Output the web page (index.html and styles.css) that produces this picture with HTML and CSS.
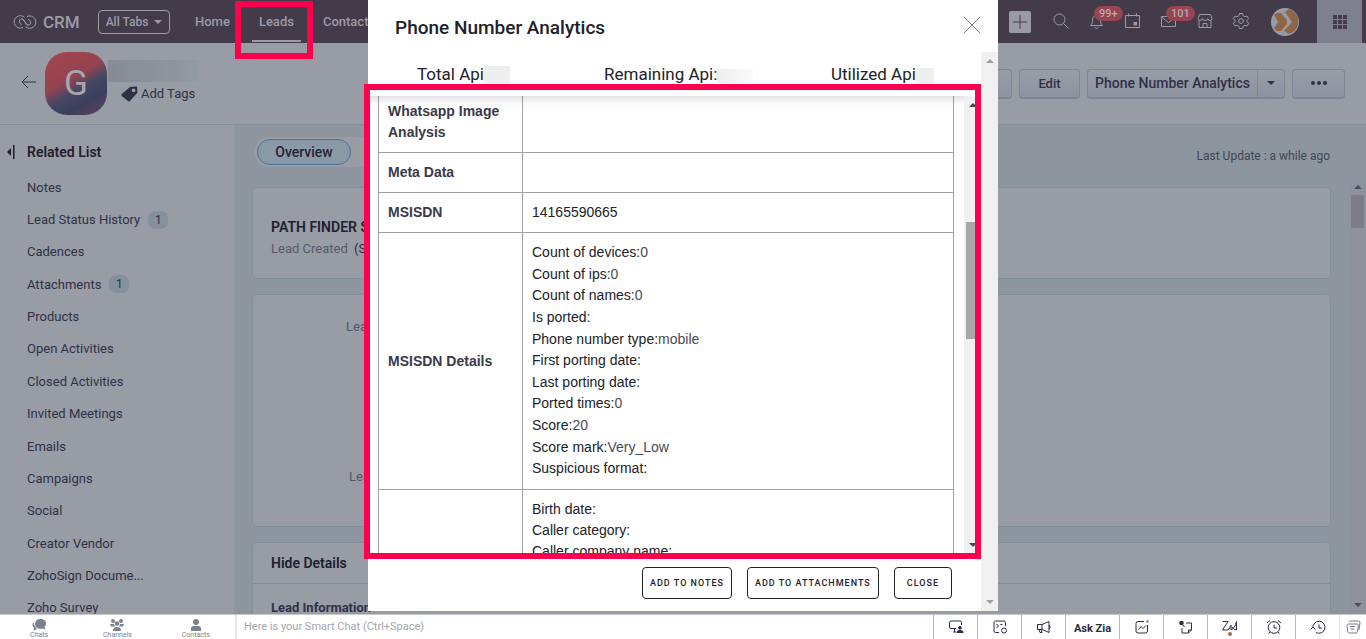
FILE: index.html
```html
<!DOCTYPE html>
<html lang="en">
<head>
    <meta charset="UTF-8">
    <meta name="viewport" content="width=device-width, initial-scale=1.0">
    <title>Phone Number Analytics</title>
    <link rel="stylesheet" href="styles.css">
</head>
<body>
    <header class="topbar">
        <svg class="logo" width="24" height="16" viewBox="0 0 24 16"><path d="M9.500 4.500L13.500 10q1.500 2 3.300.6t.4-3.400L15.500 5M14.500 11.500L10.500 6Q9 4 7.200 5.400t-.4 3.400L8.500 11M10 13.500a6.200 6.200 0 1 1 1.500-10.200M14 2.500a6.200 6.200 0 1 1-1.500 10.200"/></svg>
        <span class="brand">CRM</span>
        <button class="all-tabs">All Tabs <i class="caret"></i></button>
        <nav class="nav">
            <a href="#">Home</a>
            <a href="#" class="active">Leads</a>
            <a href="#">Contacts</a>
        </nav>
        <div class="tools">
            <button class="add" aria-label="Create"><svg width="22" height="22" viewBox="0 0 22 22"><path d="M11 4v14M4 11h14"/></svg></button>
            <button class="tool" aria-label="Search"><svg width="18" height="18" viewBox="0 0 18 18"><circle cx="7.500" cy="7.500" r="5.500"/><path d="M11.500 11.500l5 5"/></svg></button>
            <button class="tool" aria-label="Notifications"><svg width="18" height="18" viewBox="0 0 18 18"><path d="M2.500 13.500h12c-1.500-1.500-2-3-2-5.500 0-3-1.500-4.500-4-4.500S4.500 5 4.500 8c0 2.500-.5 4-2 5.500zM8.500 1.500v2M6.500 15.500q2 2 4 0"/></svg><span class="count">99+</span></button>
            <button class="tool" aria-label="Calendar"><svg width="18" height="18" viewBox="0 0 18 18"><path d="M1.500 3.500h14v12h-14zM4.500 1.500v3M12.500 1.500v3"/><path class="solid" d="M9.500 10h3.500v3.500H9.500z"/></svg></button>
            <button class="tool" aria-label="Email"><svg width="18" height="18" viewBox="0 0 18 18"><path d="M1.500 4.500h14v10h-14zM1.500 5l7 5.500 7-5.500"/></svg><span class="count">101</span></button>
            <button class="tool" aria-label="Marketplace"><svg width="18" height="18" viewBox="0 0 18 18"><path d="M3.500 2.500h11l1.500 4q0 2-2 2t-2.300-2q-.3 2-2.700 2t-2.700-2q-.3 2-2.300 2t-2-2zM3 8.500v7h12v-7M7 15.500v-4h4v4"/></svg></button>
            <button class="tool" aria-label="Settings"><svg width="18" height="18" viewBox="0 0 18 18"><path d="M7.500 1.500h3l.6 2.200 1.800 1 2.200-.6 1.500 2.600-1.600 1.600v1.400l1.600 1.600-1.500 2.600-2.200-.6-1.800 1-.6 2.200h-3l-.6-2.200-1.800-1-2.200.6-1.500-2.600L3 9.700V8.300L1.400 6.700l1.500-2.600 2.200.6 1.800-1z"/><circle cx="9" cy="9" r="2.400"/></svg></button>
            <svg class="user" width="28" height="28" viewBox="0 0 28 28"><circle cx="14" cy="14" r="14" fill="#989ba5"/><path d="M3 7l3-2h4l6 7v4l-6 7H6l-3-3 4-6zM14 4l4-3c4 1 7 4 9 8v8c-2 5-5 8-9 9l-5-3 8-9z" fill="#8f6645"/></svg>
            <button class="apps" aria-label="All apps"><svg width="14" height="14" viewBox="0 0 14 14"><path d="M0 0h4v4H0zM5 0h4v4H5zM10 0h4v4h-4zM0 5h4v4H0zM5 5h4v4H5zM10 5h4v4h-4zM0 10h4v4H0zM5 10h4v4H5zM10 10h4v4h-4z"/></svg></button>
        </div>
        <div class="mark mark-leads"></div>
    </header>

    <section class="record">
        <button class="back" aria-label="Back"><svg width="16" height="14" viewBox="0 0 16 14"><path d="M15 7H1M7 1L1 7l6 6"/></svg></button>
        <div class="initial">G</div>
        <div class="who">
            <div class="hidden-name"></div>
            <button class="tags"><svg width="17" height="16" viewBox="0 0 17 16"><path fill-rule="evenodd" d="M9 1l7-.5.5 6L9 15q-1 1-2 0L.8 10q-.8-1 0-2zM12.500 2.500a1.800 1.800 0 1 0 .1 0z"/></svg>Add Tags</button>
        </div>
        <div class="actions">
            <button class="btn send">Send Email</button>
            <button class="btn edit">Edit</button>
            <div class="split">
                <button>Phone Number Analytics</button>
                <button class="drop" aria-label="More analytics"><i class="caret"></i></button>
            </div>
            <button class="btn more" aria-label="More"><svg width="16" height="4" viewBox="0 0 16 4"><circle cx="2" cy="2" r="2"/><circle cx="8" cy="2" r="2"/><circle cx="14" cy="2" r="2"/></svg></button>
        </div>
    </section>

    <main class="page">
        <aside class="sidebar">
            <h2><svg class="fold" width="8" height="14" viewBox="0 0 8 14"><path d="M4 3v8L0 7zM6 0h1.500v14H6z"/></svg>Related List</h2>
            <ul>
                <li><a href="#">Notes</a></li>
                <li><a href="#">Lead Status History</a><span class="num">1</span></li>
                <li><a href="#">Cadences</a></li>
                <li><a href="#">Attachments</a><span class="num">1</span></li>
                <li><a href="#">Products</a></li>
                <li><a href="#">Open Activities</a></li>
                <li><a href="#">Closed Activities</a></li>
                <li><a href="#">Invited Meetings</a></li>
                <li><a href="#">Emails</a></li>
                <li><a href="#">Campaigns</a></li>
                <li><a href="#">Social</a></li>
                <li><a href="#">Creator Vendor</a></li>
                <li><a href="#">ZohoSign Docume...</a></li>
                <li><a href="#">Zoho Survey</a></li>
            </ul>
        </aside>
        <div class="content">
            <div class="view-bar">
                <div class="views"><button>Overview</button></div>
                <span class="updated">Last Update : a while ago</span>
            </div>
            <div class="scroll-area">
                <div class="cards">
                    <section class="card path">
                        <h3>PATH FINDER STAGES</h3>
                        <p><span>Lead Created</span> (Stage)</p>
                    </section>
                    <section class="card fields">
                        <p>Lead Owner</p>
                        <p>Lead Status</p>
                    </section>
                    <section class="card details">
                        <h3>Hide Details</h3>
                        <h4>Lead Information</h4>
                    </section>
                </div>
                <div class="scrollbar page-scroll"><i class="up"></i><div class="thumb"></div><i class="down"></i></div>
            </div>
        </div>
    </main>

    <footer class="chatbar">
        <div class="chat-tabs">
            <button><svg width="14" height="12" viewBox="0 0 14 12"><path d="M8 0c4 0 6 2 6 4.500 0 1.500-.5 2.500-1.500 3.500l1 2.500-3-1Q4 10.500 3 6 3 0 8 0zM2 3Q1 7 5 10l-3 1.500L2 9Q-1 6 2 3z"/></svg>Chats</button>
            <button><svg width="14" height="12" viewBox="0 0 14 12"><circle cx="3" cy="2" r="2"/><circle cx="11" cy="2" r="2"/><circle cx="7" cy="4.500" r="2.300"/><path d="M0 5h4l1 2.500H1zM14 5h-4L9 7.500h4zM3 12q0-4 4-4t4 4z"/></svg>Channels</button>
            <button><svg width="14" height="12" viewBox="0 0 14 12"><circle cx="7" cy="3" r="3"/><path d="M2 12V9.500Q2 7 4.500 7h5Q12 7 12 9.500V12z"/></svg>Contacts</button>
        </div>
        <input class="smart-chat" type="text" aria-label="Smart Chat" placeholder="Here is your Smart Chat (Ctrl+Space)">
        <div class="dock">
            <button aria-label="Screen share"><svg width="16" height="16" viewBox="0 0 16 16"><path d="M8 9.500H3q-1.500 0-1.500-1.500V3.500Q1.500 2 3 2h9q1.500 0 1.500 1.500V6M5 13h3M6.500 9.500V13"/><path class="solid" d="M12 7a1.800 1.800 0 1 1-.1 0zM8.500 14q0-3 3.500-3t3.500 3z"/></svg></button>
            <button aria-label="Scripts"><svg width="16" height="16" viewBox="0 0 16 16"><path d="M7 13.500H3.500Q2 13.500 2 12V3.500Q2 2 3.500 2H12q1.500 0 1.500 1.500V7M4.500 5l2 2-2 2M8.500 5.500h2"/><circle cx="12" cy="11.500" r="2.500"/></svg></button>
            <button aria-label="Announcements"><svg width="16" height="16" viewBox="0 0 16 16"><path d="M1.500 5.500H6l7-3v11l-7-3H1.500zM6 5.500v5M3 10.500l1 3h2l-1-3M13 6q2.500 2 0 4"/></svg></button>
            <button class="ask">Ask Zia</button>
            <button aria-label="Insights"><svg width="16" height="16" viewBox="0 0 16 16"><path d="M10 2.500H4Q2 2.500 2 4.500V12q0 2 2 2h7.500q2 0 2-2V6M4.500 10.500L7 7.500l2 2L12 6.500"/><circle class="dot" cx="13.500" cy="2.500" r="1.200"/></svg></button>
            <button aria-label="Sticky notes"><svg width="16" height="16" viewBox="0 0 16 16"><path d="M8 4h5.500v7l-3 3H4V9M10.500 14v-3h3M4.500 5.500l2 2.500"/><circle class="solid" cx="3.500" cy="4" r="2.300"/></svg></button>
            <button aria-label="Zia"><svg width="20" height="18" viewBox="0 0 20 18"><path d="M2.500 3.500H8L2.500 12H8q2-2 3-5v5q4-2 5.500-8.500V12q-3 0-4.500-3"/><circle class="dot" cx="10" cy="16" r="2"/></svg></button>
            <button aria-label="Reminders"><svg width="16" height="16" viewBox="0 0 16 16"><circle cx="8" cy="8.500" r="5.800"/><path d="M8 5.500v3.500h3M1 4l3-2.500M15 4l-3-2.500M4 13l-1.500 1.500M12 13l1.500 1.500"/></svg></button>
            <button aria-label="Recent items"><svg width="16" height="16" viewBox="0 0 16 16"><path d="M3 9a6 6 0 1 1 3 4.500M.5 10.500L3 8l2.500 2.500M9 5.500V9h3"/></svg></button>
            <button class="last" aria-label="Documents"><svg width="16" height="16" viewBox="0 0 16 16"><path d="M3.500 5h8.500q1.500 0 1.300 1.500l-.8 6q-.2 1.500-1.500 1.500H4.500Q3 14 2.800 12.500L2 6.500Q2 5 3.500 5zM4 3q0-1 1.500-1h8q1.500 0 1.500 1.500L14 11M5 7.500h5M5.500 10h4"/></svg></button>
        </div>
    </footer>

    <div class="modal" role="dialog" aria-labelledby="modalTitle">
        <div class="modal-head">
            <h1 id="modalTitle">Phone Number Analytics</h1>
            <button aria-label="Close dialog"><svg width="18" height="18" viewBox="0 0 18 18"><path d="M1 1l16 16M17 1L1 17"/></svg></button>
        </div>
        <div class="modal-main">
            <div class="modal-content">
                <div class="usage">
                    <span>Total Api<i class="mask"></i></span>
                    <span>Remaining Api:<i class="mask wide"></i></span>
                    <span>Utilized Api<i class="mask short"></i></span>
                </div>
                <div class="results">
                    <div class="table-wrap">
                        <table>
                            <tr><th>Whatsapp Image Analysis</th><td></td></tr>
                            <tr><th>Meta Data</th><td></td></tr>
                            <tr><th>MSISDN</th><td>14165590665</td></tr>
                            <tr>
                                <th>MSISDN Details</th>
                                <td>
                                    <div class="lines">
                                        <div>Count of devices:<span>0</span></div>
                                        <div>Count of ips:<span>0</span></div>
                                        <div>Count of names:<span>0</span></div>
                                        <div>Is ported:</div>
                                        <div>Phone number type:<span>mobile</span></div>
                                        <div>First porting date:</div>
                                        <div>Last porting date:</div>
                                        <div>Ported times:<span>0</span></div>
                                        <div>Score:<span>20</span></div>
                                        <div>Score mark:<span>Very_Low</span></div>
                                        <div>Suspicious format:</div>
                                    </div>
                                </td>
                            </tr>
                            <tr>
                                <th></th>
                                <td>
                                    <div>Birth date:</div>
                                    <div>Caller category:</div>
                                    <div>Caller company name:</div>
                                </td>
                            </tr>
                        </table>
                    </div>
                    <div class="scrollbar table-scroll"><i class="up"></i><div class="thumb"></div><i class="down"></i></div>
                </div>
                <div class="modal-actions">
                    <button>Add to notes</button>
                    <button>Add to attachments</button>
                    <button>Close</button>
                </div>
            </div>
            <div class="scrollbar modal-scroll"><i class="up"></i><i class="down"></i></div>
        </div>
        <div class="mark mark-results"></div>
    </div>
</body>
</html>
```
FILE: styles.css
```css
* {
    box-sizing: border-box;
}
body {
    margin: 0;
    height: 100vh;
    display: flex;
    flex-direction: column;
    overflow: hidden;
    position: relative;
    font-family: Roboto, "Liberation Sans", sans-serif;
    font-size: 13px;
    color: #303146;
    background: #989ca5;
}
h1, h2, h3, h4, p, ul {
    margin: 0;
    padding: 0;
}
button {
    font: inherit;
    color: inherit;
    background: none;
    border: 0;
    padding: 0;
    cursor: pointer;
}
a {
    color: inherit;
    text-decoration: none;
}
svg {
    display: block;
    fill: none;
    stroke: currentColor;
    flex: none;
}
.solid {
    fill: currentColor;
    stroke: none;
}
.caret {
    display: inline-block;
    border: 4px solid transparent;
    border-top-color: currentColor;
    border-bottom: 0;
}

/* top navigation */
.topbar {
    position: relative;
    flex: none;
    display: flex;
    align-items: center;
    height: 43px;
    padding-left: 13px;
    background: #433a4a;
    color: #9d9ba6;
}
.brand {
    margin-left: 6px;
    width: 55px;
    font-size: 17px;
    font-weight: 500;
    line-height: 20px;
}
.all-tabs {
    width: 72px;
    height: 24px;
    border: 1px solid #9d9ba6;
    border-radius: 4px;
    font-size: 12px;
    font-weight: 500;
    white-space: nowrap;
}
.all-tabs .caret {
    margin-left: 3px;
    vertical-align: 2px;
}
.nav {
    display: flex;
    gap: 29px;
    margin-left: 25px;
    font-size: 13px;
    font-weight: 500;
    line-height: 40px;
}
.nav a.active {
    position: relative;
}
.nav a.active::after {
    content: "";
    position: absolute;
    left: -7px;
    right: -7px;
    bottom: 0;
    height: 2px;
    background: #9d9ba6;
}
.tools {
    display: flex;
    align-items: center;
    height: 100%;
    margin-left: auto;
    padding-right: 4px;
}
.add {
    margin-right: 12px;
    border-radius: 2px;
    background: #989ba5;
    color: #433a4a;
}
.tool {
    position: relative;
    width: 36px;
    height: 38px;
    padding-bottom: 2px;
    display: flex;
    align-items: center;
    justify-content: center;
}
.count {
    position: absolute;
    left: 15px;
    top: 3px;
    height: 15px;
    padding: 0 5px;
    border-radius: 8px;
    background: #994451;
    color: #b5abb5;
    font-size: 11px;
    font-weight: 500;
    line-height: 15px;
}
.user {
    margin: 0 18px 0 12px;
    stroke: none;
}
.apps {
    width: 45px;
    height: 100%;
    background: #7f808e;
    color: #433a4a;
}
.apps svg {
    margin: auto;
    fill: currentColor;
    stroke: none;
}

/* record header */
.record {
    flex: none;
    display: flex;
    align-items: center;
    height: 82px;
    padding: 0 21px;
    border-bottom: 1px solid #83909b;
}
.back {
    margin-right: 8px;
    padding-bottom: 4px;
}
.initial {
    width: 62px;
    height: 63px;
    border-radius: 22px;
    background: linear-gradient(150deg, #a34650 0%, #95434f 42%, #454763 58%, #3b3f5c 75%, #65435a 100%);
    color: #a9a5af;
    font-size: 35px;
    line-height: 63px;
    text-align: center;
}
.who {
    margin-left: 1px;
    padding-bottom: 4px;
}
.hidden-name {
    width: 91px;
    height: 22px;
    background: linear-gradient(90deg, #868a94, #929aa3);
}
.tags {
    display: flex;
    align-items: center;
    gap: 3px;
    margin: 2px 0 0 13px;
    font-size: 13px;
    line-height: 20px;
}
.tags svg {
    fill: currentColor;
    stroke: none;
}
.actions {
    display: flex;
    gap: 7px;
    margin-left: auto;
    font-size: 13px;
    font-weight: 500;
}
.btn, .split {
    height: 30px;
    border: 1px solid #7f8591;
    border-bottom-width: 2px;
    border-radius: 4px;
    background: linear-gradient(#989ca5, #8c94a1);
}
.send {
    width: 108px;
}
.edit {
    width: 61px;
}
.split {
    display: flex;
    font-size: 14px;
}
.split button {
    width: 169px;
}
.split .drop {
    width: 27px;
    border-left: 1px solid #7f8591;
}
.drop .caret {
    vertical-align: 3px;
}
.more {
    width: 53px;
}
.more svg {
    margin: auto;
    fill: currentColor;
    stroke: none;
}

/* related list */
.page {
    flex: 1;
    min-height: 0;
    display: flex;
}
.sidebar {
    width: 234px;
    flex: none;
    display: flex;
    flex-direction: column;
    padding: 16px 0 0 27px;
}
.sidebar h2 {
    position: relative;
    font-size: 14px;
    font-weight: 600;
    line-height: 22px;
    margin-bottom: 8px;
    color: #20202f;
}
.fold {
    position: absolute;
    left: -20px;
    top: 4px;
    fill: currentColor;
    stroke: none;
}
.sidebar ul {
    flex: 1;
    display: grid;
    grid-auto-rows: 1fr;
    margin-bottom: -10px;
    list-style: none;
}
.sidebar li {
    display: flex;
    align-items: center;
    gap: 8px;
    min-height: 0;
}
.num {
    width: 20px;
    border-radius: 7px;
    background: #84919c;
    font-size: 12px;
    line-height: 18px;
    text-align: center;
}

/* record content */
.content {
    flex: 1;
    min-width: 0;
    display: flex;
    flex-direction: column;
    background: #8d959f;
}
.view-bar {
    display: flex;
    align-items: center;
    justify-content: space-between;
    padding: 12px 36px 0 20px;
}
.views {
    width: 280px;
    padding: 2px 3px;
    border-radius: 16px;
    background: #989ca5;
}
.views button {
    width: 94px;
    height: 26px;
    border: 1px solid #4d749b;
    border-radius: 13px;
    background: #8a99a7;
    color: #242434;
    font-size: 14px;
    font-weight: 500;
}
.updated {
    padding-top: 7px;
    font-size: 12px;
    color: #414654;
}
.scroll-area {
    flex: 1;
    min-height: 0;
    display: flex;
    justify-content: space-between;
    margin-top: 16px;
}
.cards {
    flex: 1;
    margin: 4px 18px 0 18px;
    display: flex;
    flex-direction: column;
    gap: 15px;
    overflow: hidden;
}
.card {
    flex: none;
    border: 1px solid #82909b;
    border-radius: 5px;
    background: #989ca5;
}
.card h3 {
    font-size: 14px;
    font-weight: 600;
    color: #20202f;
}
.path {
    height: 92px;
    padding: 29px 18px;
    line-height: 20px;
}
.path p {
    margin-top: 2px;
}
.path span {
    margin-right: 3px;
    color: #555d68;
}
.fields {
    height: 233px;
    padding: 24px 93px;
    line-height: 16px;
    color: #505863;
}
.fields p + p {
    margin: 134px 0 0 3px;
}
.details {
    height: 120px;
    line-height: 40px;
}
.details h3, .details h4 {
    padding-left: 18px;
}
.details h3 {
    border-bottom: 1px solid #828b97;
}
.details h4 {
    font-size: 13px;
    line-height: 48px;
}

/* scroll bars */
.scrollbar {
    flex: none;
    display: flex;
    flex-direction: column;
    align-items: center;
    width: 17px;
    background: #f0f0f0;
    color: #a0a0a0;
}
.scrollbar .up, .scrollbar .down {
    border: 4px solid transparent;
}
.scrollbar .up {
    border-bottom-color: currentColor;
    border-top: 0;
    margin: 7px 0;
}
.scrollbar .down {
    border-top-color: currentColor;
    border-bottom: 0;
    margin: auto 0 7px;
}
.scrollbar .thumb {
    width: 13px;
    background: #a8a8a8;
}
.page-scroll {
    background: #8d929d;
    color: #4b4c5e;
}
.page-scroll .up {
    margin: 2px 0 6px;
}
.page-scroll .thumb {
    height: 33px;
    background: #7e7d87;
}
.table-scroll {
    color: #454456;
}
.table-scroll .thumb {
    margin-top: 108px;
    height: 117px;
}

/* bottom chat bar */
.chatbar {
    flex: none;
    display: flex;
    height: 25px;
    border-top: 1px solid #c8cad0;
    background: #fff;
}
.chat-tabs {
    display: flex;
    width: 237px;
    border-right: 2px solid #e6e7ea;
}
.chat-tabs button {
    flex: 1;
    color: #7c818c;
    font-size: 7px;
    line-height: 8px;
}
.chat-tabs svg {
    margin: 4px auto 0;
    fill: currentColor;
    stroke: none;
}
.smart-chat {
    flex: 1;
    padding: 0 7px 2px;
    border: 0;
    font-family: inherit;
    font-size: 11px;
}
.smart-chat::placeholder {
    color: #a3a5ab;
}
.dock {
    display: flex;
}
.dock button {
    width: 44px;
    border-left: 1px solid #b5b7bd;
    color: #2c2d42;
}
.dock svg {
    margin: 0 auto;
}
.dock .dot {
    fill: #a0694d;
    stroke: none;
}
.dock .ask {
    width: 54px;
    padding-top: 3px;
    font-size: 11px;
    font-weight: 700;
}
.dock .last {
    width: 27px;
    border-left-color: #e3e4e7;
    color: #777985;
}

/* analytics dialog */
.modal {
    position: absolute;
    top: 0;
    bottom: 28px;
    left: 50%;
    width: 630px;
    margin-left: -315px;
    display: flex;
    flex-direction: column;
    background: #fff;
    color: #212129;
}
.modal-head {
    display: flex;
    align-items: center;
    justify-content: space-between;
    height: 52px;
    padding: 2px 17px 0 27px;
}
.modal-head h1 {
    font-size: 19px;
    font-weight: 500;
}
.modal-head button {
    padding-bottom: 4px;
    color: #777785;
}
.modal-main {
    flex: 1;
    min-height: 0;
    display: flex;
}
.modal-content {
    flex: 1;
    display: flex;
    flex-direction: column;
}
.usage {
    display: grid;
    grid-template-columns: 187px 227px 1fr;
    height: 44px;
    padding-left: 49px;
    font-size: 17px;
    line-height: 44px;
}
.mask {
    display: inline-block;
    width: 26px;
    height: 20px;
    background: #eee;
    vertical-align: middle;
}
.mask.wide {
    width: 36px;
    height: 14px;
    background: linear-gradient(90deg, #eee, #fafafa);
}
.mask.short {
    width: 18px;
    height: 16px;
}
.results {
    flex: 1;
    min-height: 0;
    display: flex;
}
.table-wrap {
    flex: 1;
    padding: 0 10px;
    overflow: hidden;
    position: relative;
}
.table-wrap::before {
    content: "";
    position: absolute;
    top: 0;
    left: 0;
    right: 0;
    height: 16px;
    background: linear-gradient(rgba(60, 50, 80, 0.14), rgba(60, 80, 70, 0.02) 50%, transparent);
}
table {
    width: 100%;
    margin-top: -5px;
    border-collapse: collapse;
    table-layout: fixed;
    font-family: "Liberation Sans", Arial, sans-serif;
    font-size: 14px;
    line-height: 21px;
}
th, td {
    padding: 9px;
    border: 1px solid #a0a0a0;
    text-align: left;
}
th {
    width: 144px;
    color: #3a3948;
}
td span {
    color: #4a4a55;
}
.lines {
    display: grid;
    grid-auto-rows: 1fr;
    height: 238px;
}
.modal-actions {
    display: flex;
    justify-content: flex-end;
    gap: 15px;
    padding: 13px 29px 12px 0;
}
.modal-actions button {
    height: 32px;
    padding: 0 7px;
    border: 1px solid #212129;
    border-radius: 4px;
    font-size: 9px;
    font-weight: 500;
    letter-spacing: 1px;
    text-transform: uppercase;
}
.modal-actions button:last-child {
    padding: 0 12px;
}

/* highlight frames */
.mark {
    position: absolute;
    border: 6px solid #ff004f;
    pointer-events: none;
}
.mark-leads {
    left: 235px;
    top: 1px;
    width: 78px;
    height: 58px;
}
.mark-results {
    left: -4px;
    right: 17px;
    top: 84px;
    bottom: 52px;
}
```
